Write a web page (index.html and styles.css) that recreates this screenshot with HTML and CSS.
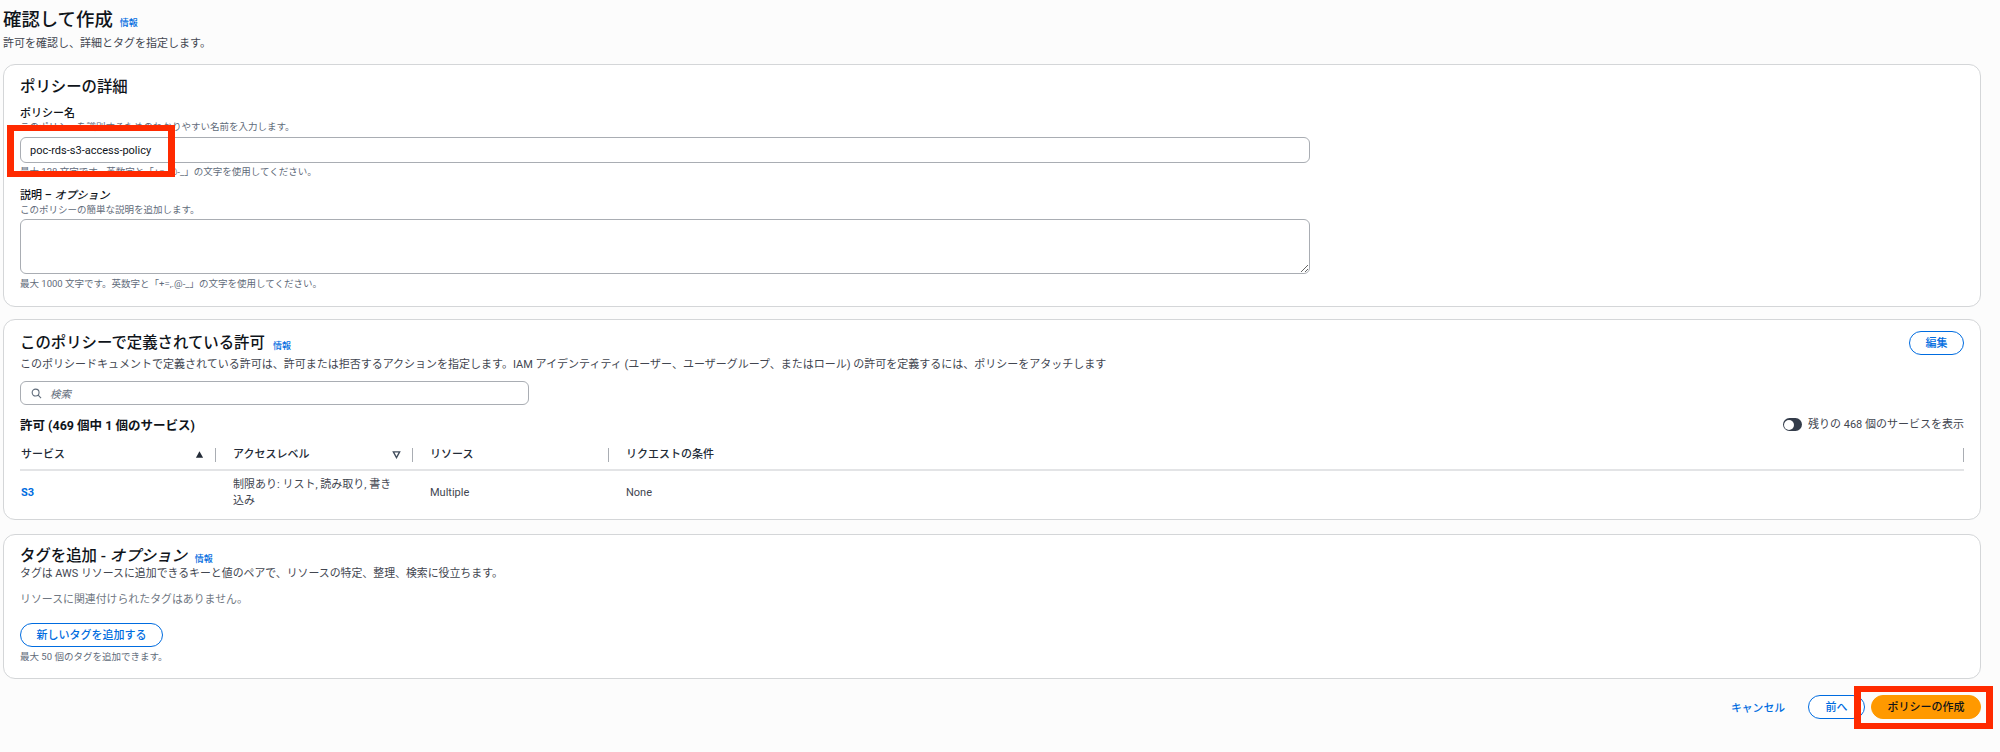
FILE: index.html
```html
<!DOCTYPE html>
<html lang="ja">
<head>
<meta charset="utf-8">
<title>確認して作成</title>
<link rel="stylesheet" href="styles.css">
</head>
<body>
<div class="page">
  <div class="page-title"><h1>確認して作成</h1><a class="info">情報</a></div>
  <p class="page-sub">許可を確認し、詳細とタグを指定します。</p>

  <section class="panel panel-details">
    <h2>ポリシーの詳細</h2>
    <label class="label label-first">ポリシー名</label>
    <p class="small desc-first">このポリシーを識別するためのわかりやすい名前を入力します。</p>
    <input class="field" type="text" value="poc-rds-s3-access-policy">
    <p class="small hint-name">最大 128 文字です。英数字と「+=,.@-_」の文字を使用してください。</p>
    <label class="label label-second">説明 – <em>オプション</em></label>
    <p class="small desc-second">このポリシーの簡単な説明を追加します。</p>
    <textarea class="area"></textarea>
    <p class="small hint-desc">最大 1000 文字です。英数字と「+=,.@-_」の文字を使用してください。</p>
  </section>

  <section class="panel panel-perms">
    <div class="perm-head">
      <div class="heading-row"><h2>このポリシーで定義されている許可</h2><a class="info">情報</a></div>
      <button class="btn btn-edit">編集</button>
    </div>
    <p class="perm-desc">このポリシードキュメントで定義されている許可は、許可または拒否するアクションを指定します。IAM アイデンティティ (ユーザー、ユーザーグループ、またはロール) の許可を定義するには、ポリシーをアタッチします</p>
    <div class="search">
      <svg class="search-icon" viewBox="0 0 16 16" aria-hidden="true"><circle cx="6.7" cy="6.7" r="5" fill="none" stroke="#5f6b7a" stroke-width="1.6"/><path d="M10.4 10.4 14.6 14.6" stroke="#5f6b7a" stroke-width="1.6" fill="none"/></svg>
      <span class="search-text">検索</span>
    </div>
    <div class="count-row">
      <h3>許可 (469 個中 1 個のサービス)</h3>
      <div class="toggle-wrap"><span class="toggle"><span class="knob"></span></span><span class="toggle-text">残りの 468 個のサービスを表示</span></div>
    </div>
    <div class="table-head">
      <div class="th th-first"><span>サービス</span><svg class="sort" viewBox="0 0 10 10" aria-hidden="true"><path d="M1 8.5 5 1.5 9 8.5Z" fill="#232b37"/></svg></div>
      <div class="th"><span>アクセスレベル</span><svg class="sort" viewBox="0 0 10 10" aria-hidden="true"><path d="M1.5 2 8.500 2 5 8.500Z" fill="none" stroke="#414d5c" stroke-width="1.500"/></svg></div>
      <div class="th"><span>リソース</span></div>
      <div class="th"><span>リクエストの条件</span></div>
    </div>
    <div class="table-row">
      <div class="td td-first"><a class="svc">S3</a></div>
      <div class="td td-wrap">制限あり: リスト, 読み取り, 書き込み</div>
      <div class="td">Multiple</div>
      <div class="td">None</div>
    </div>
  </section>

  <section class="panel panel-tags">
    <div class="heading-row"><h2>タグを追加 - <em>オプション</em></h2><a class="info">情報</a></div>
    <p class="tag-desc">タグは AWS リソースに追加できるキーと値のペアで、リソースの特定、整理、検索に役立ちます。</p>
    <p class="tag-none">リソースに関連付けられたタグはありません。</p>
    <button class="btn btn-add">新しいタグを追加する</button>
    <p class="small hint-tag">最大 50 個のタグを追加できます。</p>
  </section>

  <div class="actions">
    <a class="cancel">キャンセル</a>
    <button class="btn btn-prev">前へ</button>
    <button class="btn btn-primary">ポリシーの作成</button>
  </div>

  <div class="mark mark-name"></div>
  <div class="mark mark-create"></div>
</div>
</body>
</html>
```
FILE: styles.css
```css
* { box-sizing: border-box; }
html, body { margin: 0; padding: 0; }
body {
  background: #fcfcfc;
  color: #0f141a;
  font-family: Roboto, "Noto Sans CJK JP", sans-serif;
  height: 752px;
  overflow: hidden;
}
h1, h2, h3, p { margin: 0; }
em { font-style: italic; }

.page { position: relative; padding: 8px 19px 0 3px; }

.page-title { display: flex; align-items: center; height: 24px; gap: 7px; }
h1 { font-size: 18.4px; line-height: 24px; font-weight: 500; }
.info { color: #006ce0; font-size: 9px; line-height: 12px; font-weight: 500; margin-top: 5px; }
.page-sub { margin-top: 5px; font-size: 11px; line-height: 14px; color: #424650; }

.panel {
  background: #fff;
  border: 1px solid #d4d6d8;
  border-radius: 12px;
  padding-left: 16px;
  padding-right: 16px;
}
h2 { font-size: 15.4px; line-height: 20px; font-weight: 500; }
.small { font-size: 9.5px; line-height: 12px; color: #5f6b7a; }
.label { display: block; font-size: 11px; line-height: 14px; font-weight: 500; }

.panel-details { margin-top: 13px; padding-top: 12px; padding-bottom: 16px; }
.label-first { margin-top: 10px; }
.desc-first { margin-top: 0; }
.field {
  display: block;
  width: 1290px;
  height: 26px;
  margin-top: 4px;
  padding: 0 9px;
  border: 1px solid #a9adb3;
  border-radius: 6px;
  background: #fff;
  color: #0f141a;
  font: 400 11px Roboto, "Noto Sans CJK JP", sans-serif;
  outline: none;
}
.hint-name { margin-top: 3px; }
.label-second { margin-top: 11px; }
.desc-second { margin-top: 1px; }
.area {
  display: block;
  width: 1290px;
  height: 55px;
  margin-top: 3px;
  border: 1px solid #a9adb3;
  border-radius: 6px;
  background: #fff;
  outline: none;
}
.hint-desc { margin-top: 4px; }

.panel-perms { margin-top: 12px; padding-top: 11px; padding-bottom: 4px; }
.perm-head { display: flex; justify-content: space-between; align-items: center; height: 24px; }
.heading-row { display: flex; align-items: center; gap: 8px; }
.perm-desc { margin-top: 4px; font-size: 11px; line-height: 12px; color: #424650; }
.search {
  display: flex;
  align-items: center;
  gap: 8px;
  width: 509px;
  height: 24px;
  margin-top: 10px;
  padding-left: 10px;
  border: 1px solid #a9adb3;
  border-radius: 6px;
}
.search-icon { width: 11px; height: 11px; }
.search-text { font-size: 10.5px; font-style: italic; color: #5f6b7a; }
.count-row { display: flex; justify-content: space-between; align-items: center; height: 14px; margin-top: 14px; }
h3 { font-size: 12.5px; line-height: 14px; font-weight: 700; }
.toggle-wrap { display: flex; align-items: center; gap: 6px; margin-top: -3px; }
.toggle { display: block; width: 19px; height: 13px; border-radius: 7px; background: #333c4a; padding: 1.5px; }
.knob { display: block; width: 10px; height: 10px; border-radius: 50%; background: #fff; }
.toggle-text { font-size: 11px; line-height: 14px; color: #424650; }

.table-head, .table-row { display: grid; grid-template-columns: 196px 197px 196px 1fr; }
.table-head { height: 28px; margin-top: 8px; padding-bottom: 1px; align-items: center; }
.th {
  display: flex;
  justify-content: space-between;
  align-items: center;
  height: 14px;
  padding: 0 11px 0 17px;
  border-right: 1px solid #a9adb3;
  font-size: 11px;
  line-height: 14px;
  color: #232b37;
  font-weight: 500;
}
.th-first { padding-left: 1px; }
.sort { width: 9px; height: 9px; }
.table-row { height: 46px; border-top: 2px solid #e3e4e6; align-items: center; }
.td { padding: 0 20px 0 17px; font-size: 11px; line-height: 16px; color: #424650; }
.td-first { padding-left: 1px; }
.svc { color: #006ce0; font-weight: 700; }

.panel-tags { margin-top: 14px; padding-top: 11px; padding-bottom: 15px; }
.tag-desc { margin-top: 1px; font-size: 10.9px; line-height: 14px; color: #424650; }
.tag-none { margin-top: 12px; font-size: 10.9px; line-height: 14px; color: #6f7782; }
.btn {
  display: block;
  height: 24px;
  padding: 0;
  border: 1px solid #006ce0;
  border-radius: 12px;
  background: #fff;
  color: #006ce0;
  font: 500 11px/1 Roboto, "Noto Sans CJK JP", sans-serif;
}
.btn-add { width: 143px; margin-top: 16px; }
.btn-edit { width: 55px; }
.hint-tag { margin-top: 4px; }

.actions { display: flex; justify-content: flex-end; align-items: center; height: 24px; margin-top: 16px; }
.cancel { color: #006ce0; font-size: 10.8px; font-weight: 500; margin-right: 23px; }
.btn-prev { width: 57px; margin-right: 6px; }
.btn-primary { width: 110px; background: #ff9900; border-color: #ff9900; color: #0f141a; }

.mark { position: absolute; border-style: solid; border-color: #ff2a00; border-width: 6px 7px; pointer-events: none; }
.mark-name { left: 7px; top: 125px; width: 168px; height: 52px; }
.mark-create { left: 1854px; top: 686px; width: 139px; height: 43px; }
```
